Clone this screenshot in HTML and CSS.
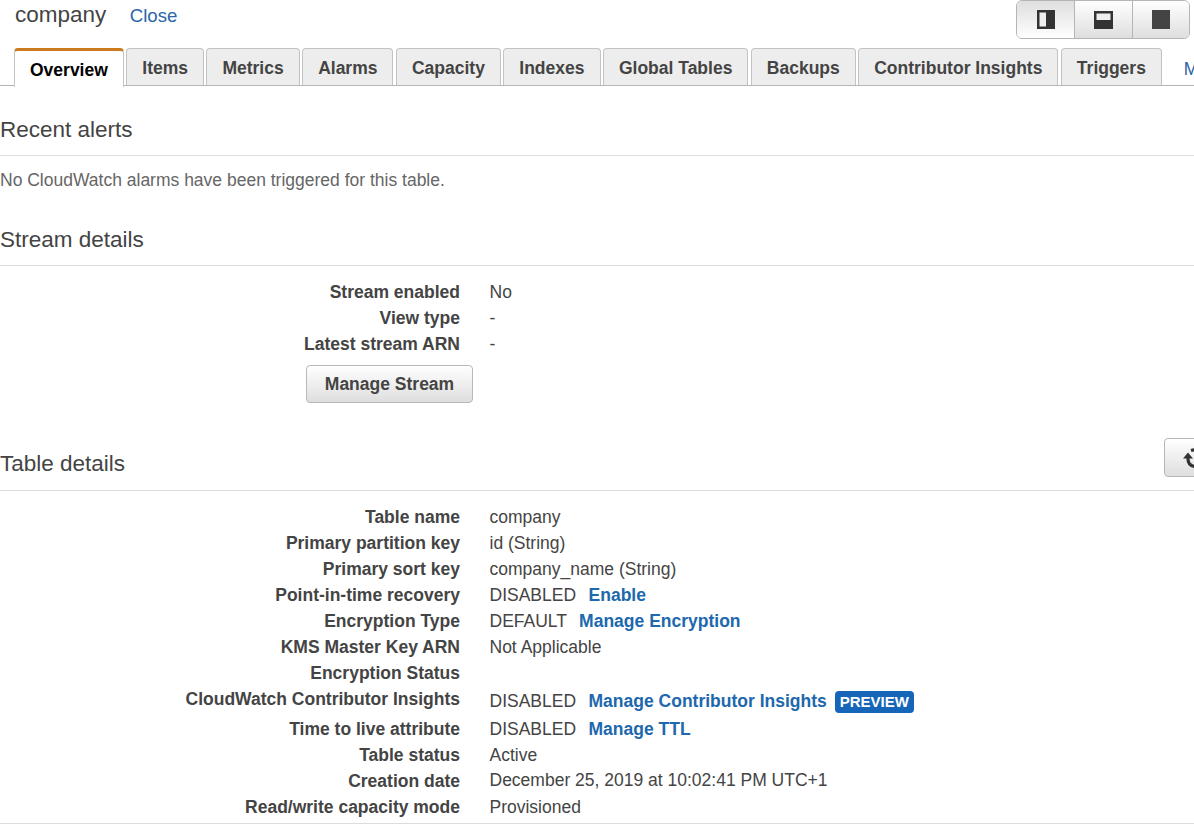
FILE: index.html
```
<!DOCTYPE html>
<html lang="en">
<head>
<meta charset="utf-8">
<title>company - Overview</title>
<link rel="stylesheet" href="styles.css">
</head>
<body>
<div class="page">
  <header class="topbar">
    <h1 class="table-title">company</h1>
    <a class="close">Close</a>
    <div class="layout-switch">
      <span class="switch active"><svg width="18" height="19" viewBox="0 0 18 19"><path fill="#333" d="M0 0h18v19H0z"/><path fill="#eee" d="M2.500 2.500h6.500v14H2.500z"/></svg></span>
      <span class="switch"><svg width="19" height="18" viewBox="0 0 19 18"><path fill="#333" d="M0 0h19v18H0z"/><path fill="#eee" d="M2.500 2.500h14v6.500h-14z"/></svg></span>
      <span class="switch"><svg width="18" height="19" viewBox="0 0 18 19"><path fill="#444" d="M0 0h18v19H0z"/></svg></span>
    </div>
  </header>
  <nav class="tabs">
    <a class="tab current">Overview</a>
    <a class="tab">Items</a>
    <a class="tab">Metrics</a>
    <a class="tab">Alarms</a>
    <a class="tab">Capacity</a>
    <a class="tab">Indexes</a>
    <a class="tab">Global Tables</a>
    <a class="tab">Backups</a>
    <a class="tab">Contributor Insights</a>
    <a class="tab">Triggers</a>
    <a class="more">More</a>
  </nav>
  <section class="alerts">
    <h2 class="heading">Recent alerts</h2>
    <p class="note">No CloudWatch alarms have been triggered for this table.</p>
  </section>
  <section class="stream">
    <h2 class="heading">Stream details</h2>
    <dl class="details">
      <dt>Stream enabled</dt><dd>No</dd>
      <dt>View type</dt><dd>-</dd>
      <dt>Latest stream ARN</dt><dd>-</dd>
    </dl>
    <button class="button manage">Manage Stream</button>
  </section>
  <section class="table-info">
    <h2 class="heading">Table details</h2>
    <button class="button refresh" aria-label="Refresh"><svg width="22" height="22" viewBox="0 0 22 22"><path fill="none" stroke="#333" stroke-width="3.200" d="M5 9v2c0 4 2.500 7 7 7.500M8 2.500c6.500-2 10.500 2 10.500 7.500v2"/><path fill="#333" d="M0 10.500l5-6 5 6zM13.500 11.500h9l-4 6z"/></svg></button>
    <dl class="details">
      <dt>Table name</dt><dd>company</dd>
      <dt>Primary partition key</dt><dd>id (String)</dd>
      <dt>Primary sort key</dt><dd>company_name (String)</dd>
      <dt>Point-in-time recovery</dt><dd>DISABLED <a class="link">Enable</a></dd>
      <dt>Encryption Type</dt><dd>DEFAULT <a class="link">Manage Encryption</a></dd>
      <dt>KMS Master Key ARN</dt><dd>Not Applicable</dd>
      <dt>Encryption Status</dt><dd></dd>
      <dt class="tall">CloudWatch Contributor Insights</dt><dd class="tall">DISABLED <a class="link">Manage Contributor Insights</a><span class="badge">PREVIEW</span></dd>
      <dt>Time to live attribute</dt><dd>DISABLED <a class="link">Manage TTL</a></dd>
      <dt>Table status</dt><dd>Active</dd>
      <dt>Creation date</dt><dd class="date">December 25, 2019 at 10:02:41 PM UTC+1</dd>
      <dt>Read/write capacity mode</dt><dd>Provisioned</dd>
    </dl>
  </section>
</div>
</body>
</html>
```
FILE: styles.css
```
* { box-sizing: border-box; }
body { margin: 0; background: #fff; color: #444; font: 17.5px/26px "Liberation Sans", Arial, sans-serif; }
.page { width: 1194px; height: 824px; overflow: hidden; border-bottom: 1px solid #ddd; }
.topbar { display: flex; align-items: flex-start; height: 48px; padding: 0 4px 0 15px; }
.table-title { margin: 2px 23.500px 0 0; font-size: 22.500px; font-weight: 400; line-height: 26px; }
.close { margin-top: 3px; color: #2a66a8; font-size: 18.600px; }
.layout-switch { display: flex; margin-left: auto; width: 174px; height: 39px; border: 1px solid #b5b5b5; border-radius: 6px; overflow: hidden; }
.switch { flex: 1; display: flex; align-items: center; justify-content: center; background: linear-gradient(#fff, #dedede); }
.switch + .switch { border-left: 1px solid #b5b5b5; }
.switch.active { padding-left: 1px; background: linear-gradient(#dedede, #fff); }
.tabs { display: flex; gap: 2.450px; height: 38px; padding-left: 14px; border-bottom: 1px solid #b5b5b5; white-space: nowrap; }
.tab { flex: none; height: 37px; padding: 0 15px; border: 1px solid #c3c3c3; border-bottom: 0; border-radius: 4px 4px 0 0; background: #ededed; font-weight: 700; line-height: 38px; }
.tab.current { height: 39px; border-top: 3px solid #cc7a1d; background: #fff; color: #000; line-height: 39px; }
.more { margin-left: 19.500px; color: #2a66a8; line-height: 42px; }
.heading { margin: 0; height: 52px; border-bottom: 1px solid #ddd; font-size: 22.500px; font-weight: 400; line-height: 52px; }
.alerts { padding-top: 18px; }
.note { margin: 11px 0 0; color: #666; }
.stream { margin-top: 21px; }
.stream .heading { line-height: 51px; }
.details { display: grid; grid-template-columns: 460px 1fr; column-gap: 29.500px; grid-auto-rows: 26px; margin: 0; padding-top: 13px; }
.details dt { text-align: right; font-weight: 700; }
.details dd { margin: 0; white-space: nowrap; }
.details .tall { height: 30px; }
dd.tall { padding-top: 2px; }
dd.date { margin-top: -1px; }
.link { margin-left: 7.600px; color: #2068ad; font-weight: 700; }
.badge { display: inline-block; margin-left: 8px; padding: 0 5px; height: 22px; border-radius: 4px; background: #1565b8; color: #fff; font-size: 15px; font-weight: 700; line-height: 22px; }
.button { padding: 0; border: 1px solid #b8b8b8; border-radius: 4px; background: linear-gradient(#fff, #dedede); color: #444; font: 700 17.500px "Liberation Sans", Arial, sans-serif; }
.manage { display: block; width: 167px; height: 38px; margin: 8px 0 0 306px; }
.table-info { display: grid; grid-template-columns: 1164px 40px; margin-top: 35px; }
.table-info .heading { grid-column: 1 / 3; grid-row: 1; height: 53px; }
.refresh { grid-column: 2; grid-row: 1; width: 56px; height: 39px; padding: 7px 0 0 18px; text-align: left; }
.table-info .details { grid-column: 1 / 3; grid-template-rows: repeat(7, 26px) 30px; }
```
